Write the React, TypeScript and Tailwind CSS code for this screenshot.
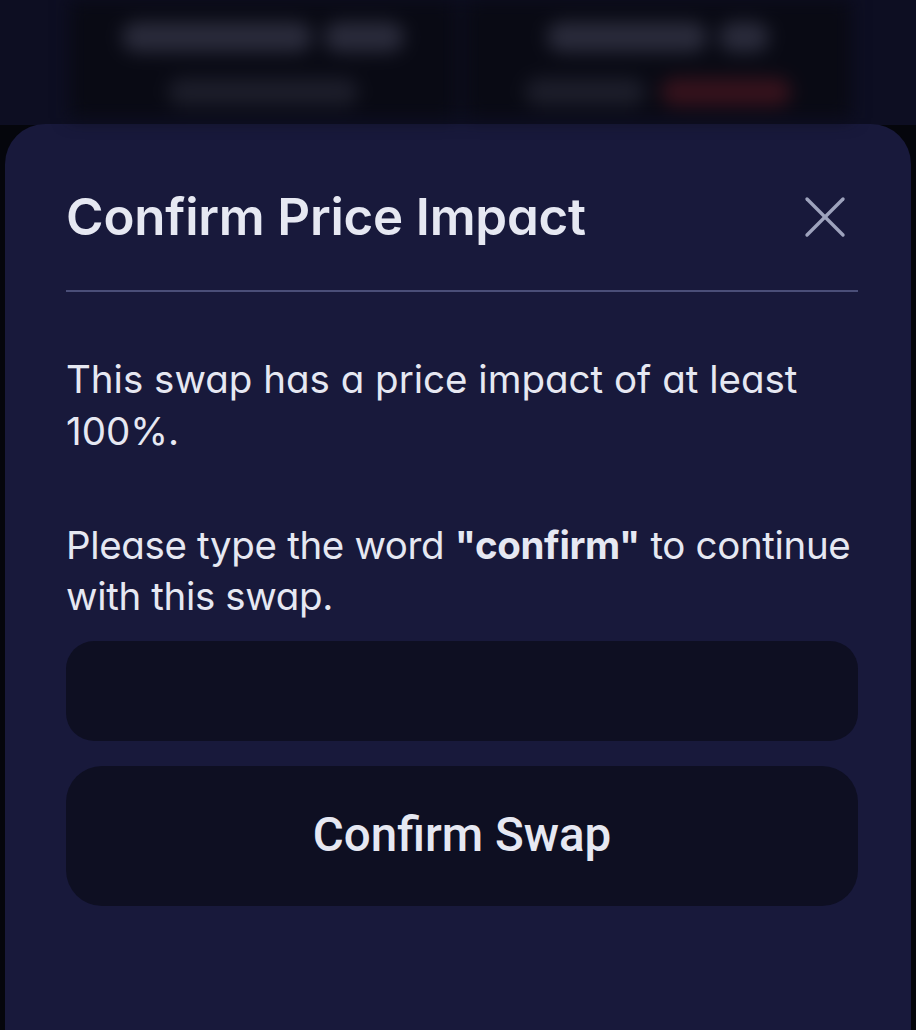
import React from "react";

export default function App() {
  return (
    <div className="flex h-[1030px] w-full flex-col overflow-hidden bg-[#05060c] [font-family:Inter,'Noto_Sans',sans-serif] [font-feature-settings:'cv11']">
      {/* blurred background content */}
      <div className="flex h-[125px] shrink-0 bg-[#0d0e22] pl-[5px]">
        <div className="flex h-full w-full gap-[8px] px-[65px] blur-[9px]">
          <div className="flex h-[118px] flex-1 flex-col items-center gap-[26px] bg-[#090a14] pt-[22px]">
            <div className="flex gap-[12px]">
              <div className="h-[30px] w-[190px] rounded-full bg-[#2a2b3b]" />
              <div className="h-[30px] w-[80px] rounded-full bg-[#2a2b3b]" />
            </div>
            <div className="h-[28px] w-[190px] rounded-full bg-[#1c1d2a]" />
          </div>
          <div className="flex h-[118px] flex-1 flex-col items-center gap-[26px] bg-[#090a14] pt-[22px]">
            <div className="flex gap-[12px]">
              <div className="h-[30px] w-[160px] rounded-full bg-[#2a2b3b]" />
              <div className="h-[30px] w-[50px] rounded-full bg-[#2a2b3b]" />
            </div>
            <div className="flex gap-[16px]">
              <div className="h-[28px] w-[120px] rounded-full bg-[#1c1d2a]" />
              <div className="h-[28px] w-[130px] rounded-full bg-[#36121c]" />
            </div>
          </div>
        </div>
      </div>

      {/* modal sheet */}
      <div className="-mt-px ml-[5px] mr-[5px] flex flex-1 flex-col rounded-t-[40px] bg-[#18193b] pl-[61px] pr-[53px] pt-[65px]">
        <div className="flex items-center justify-between">
          <h2 className="text-[51px] font-semibold leading-[56px] tracking-[-0.2px] text-[#e6e8f2]">
            Confirm Price Impact
          </h2>
          <svg
            width="44"
            height="44"
            viewBox="0 0 44 44"
            className="mr-[11px] shrink-0"
            fill="none"
            stroke="#9ea3bd"
            strokeWidth="3.4"
            strokeLinecap="round"
          >
            <line x1="4" y1="4" x2="40" y2="40" />
            <line x1="40" y1="4" x2="4" y2="40" />
          </svg>
        </div>
        <div className="mt-[45px] h-[2px] w-full bg-[#4a4e78]" />

        <p className="mt-[61px] text-[38.5px] leading-[52px] text-[#e6e8f2]">
          This swap has a price impact of at least 100%.
        </p>
        <p className="-mr-[26px] mt-[63px] text-[38.5px] leading-[51px] tracking-[-0.35px] text-[#e6e8f2]">
          Please type the word <span className="font-bold">"confirm"</span> to continue with this swap.
        </p>

        <div className="mt-[19px] h-[100px] w-full rounded-[28px] bg-[#0e0f22]" />
        <div className="mt-[25px] flex h-[140px] w-full items-center justify-center rounded-[36px] bg-[#0e0f22]">
          <span className="text-[47.5px] font-medium text-[#e6e8f2] [font-family:Roboto,'Liberation_Sans',sans-serif]">
            Confirm Swap
          </span>
        </div>
      </div>
    </div>
  );
}
